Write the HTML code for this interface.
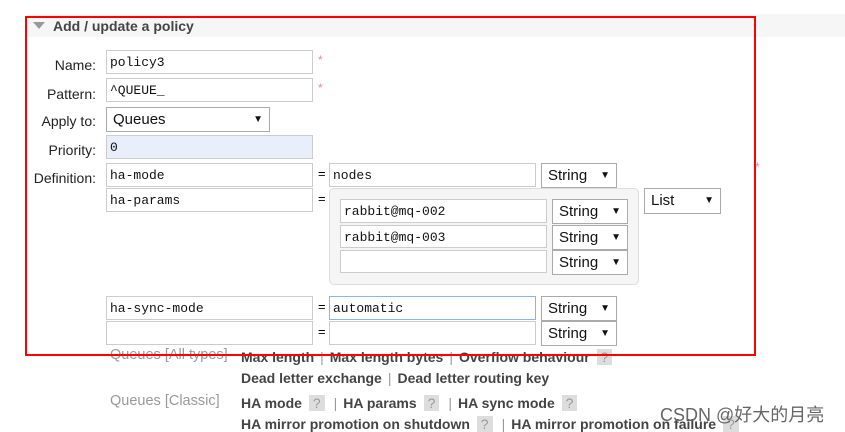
<!DOCTYPE html><html><head><style>
body{margin:0;width:845px;height:432px;background:#fff;position:relative;overflow:hidden;font-family:"Liberation Sans",sans-serif}
.a{position:absolute}
.hd{left:27px;top:14px;width:818px;height:23px;background:#f6f6f6}
.lb{font-size:14px;color:#222;text-align:right;width:96px;left:0}
.in{border:1px solid #ccc;background:#fff;box-sizing:border-box;font-family:"Liberation Mono",monospace;font-size:13px;padding:4px 0 0 3px;color:#111}
.se{border:1px solid #aaa;background:#fff;box-sizing:border-box;font-size:15px;padding:3px 0 0 6px;color:#111}
.se:after{content:"▼";position:absolute;right:6px;top:6px;font-size:10px}
.eq{font-size:13px;left:318px}
.st{color:#e88;font-size:12px}
.g{font-size:14.5px;color:#999;left:110px}
.k{font-size:14px;font-weight:bold;color:#444;left:241px;white-space:nowrap}
.q{display:inline-block;background:#ddd;color:#999;font-weight:normal;padding:0 4px;margin:0 3px}
.sp{color:#999;font-weight:normal;margin:0 6px}
</style></head><body>
<div class="a hd"></div>
<div class="a" style="left:33px;top:22px;width:0;height:0;border-left:6px solid transparent;border-right:6px solid transparent;border-top:7px solid #999"></div>
<div class="a" style="left:53px;top:18px;font-size:14px;font-weight:bold;color:#444">Add / update a policy</div>
<div class="a lb" style="top:57px">Name:</div>
<div class="a lb" style="top:86px">Pattern:</div>
<div class="a lb" style="top:113px">Apply to:</div>
<div class="a lb" style="top:142px">Priority:</div>
<div class="a lb" style="top:170px">Definition:</div>
<div class="a in" style="left:106px;top:50px;width:207px;height:24px">policy3</div>
<div class="a st" style="left:318px;top:53px">*</div>
<div class="a in" style="left:106px;top:78px;width:207px;height:24px">^QUEUE_</div>
<div class="a st" style="left:318px;top:81px">*</div>
<div class="a se" style="left:106px;top:107px;width:164px;height:25px">Queues</div>
<div class="a in" style="left:106px;top:135px;width:207px;height:24px;background:#e8eefa">0</div>
<div class="a in" style="left:106px;top:163px;width:207px;height:24px">ha-mode</div>
<div class="a eq" style="top:166px">=</div>
<div class="a in" style="left:329px;top:163px;width:207px;height:24px">nodes</div>
<div class="a se" style="left:541px;top:163px;width:76px;height:25px">String</div>
<div class="a in" style="left:106px;top:188px;width:207px;height:24px">ha-params</div>
<div class="a eq" style="top:191px">=</div>
<div class="a" style="left:329px;top:188px;width:310px;height:97px;background:#f5f5f5;border:1px solid #ddd;border-radius:5px;box-sizing:border-box"></div>
<div class="a in" style="left:340px;top:199px;width:207px;height:24px">rabbit@mq-002</div>
<div class="a se" style="left:552px;top:199px;width:76px;height:25px">String</div>
<div class="a in" style="left:340px;top:225px;width:207px;height:23px">rabbit@mq-003</div>
<div class="a se" style="left:552px;top:225px;width:76px;height:25px">String</div>
<div class="a in" style="left:340px;top:250px;width:207px;height:23px"></div>
<div class="a se" style="left:552px;top:250px;width:76px;height:25px">String</div>
<div class="a se" style="left:644px;top:188px;width:77px;height:26px">List</div>
<div class="a in" style="left:106px;top:296px;width:207px;height:24px">ha-sync-mode</div>
<div class="a eq" style="top:299px">=</div>
<div class="a in" style="left:329px;top:296px;width:207px;height:24px;border-color:#8ab4f0">automatic</div>
<div class="a se" style="left:541px;top:296px;width:76px;height:25px">String</div>
<div class="a in" style="left:106px;top:321px;width:207px;height:24px"></div>
<div class="a eq" style="top:324px">=</div>
<div class="a in" style="left:329px;top:321px;width:207px;height:24px"></div>
<div class="a se" style="left:541px;top:321px;width:76px;height:25px">String</div>
<div class="a st" style="left:755px;top:160px">*</div>
<div class="a g" style="top:347px">Queues [All types]</div>
<div class="a k" style="top:349px">Max length<span class="sp">|</span>Max length bytes<span class="sp">|</span>Overflow behaviour <span class="q">?</span></div>
<div class="a k" style="top:370px">Dead letter exchange<span class="sp">|</span>Dead letter routing key</div>
<div class="a g" style="top:393px">Queues [Classic]</div>
<div class="a k" style="top:395px">HA mode <span class="q">?</span><span class="sp">|</span>HA params <span class="q">?</span><span class="sp">|</span>HA sync mode <span class="q">?</span></div>
<div class="a k" style="top:416px">HA mirror promotion on shutdown <span class="q">?</span><span class="sp">|</span>HA mirror promotion on failure <span class="q">?</span></div>
<div class="a" style="left:25px;top:16px;width:731px;height:340px;border:2px solid #f00;box-sizing:border-box"></div>
<div class="a" style="left:660px;top:401px;font-size:18px;color:#666;font-family:'Liberation Sans','Noto Sans CJK SC',sans-serif">CSDN @好大的月亮</div>
</body></html>
